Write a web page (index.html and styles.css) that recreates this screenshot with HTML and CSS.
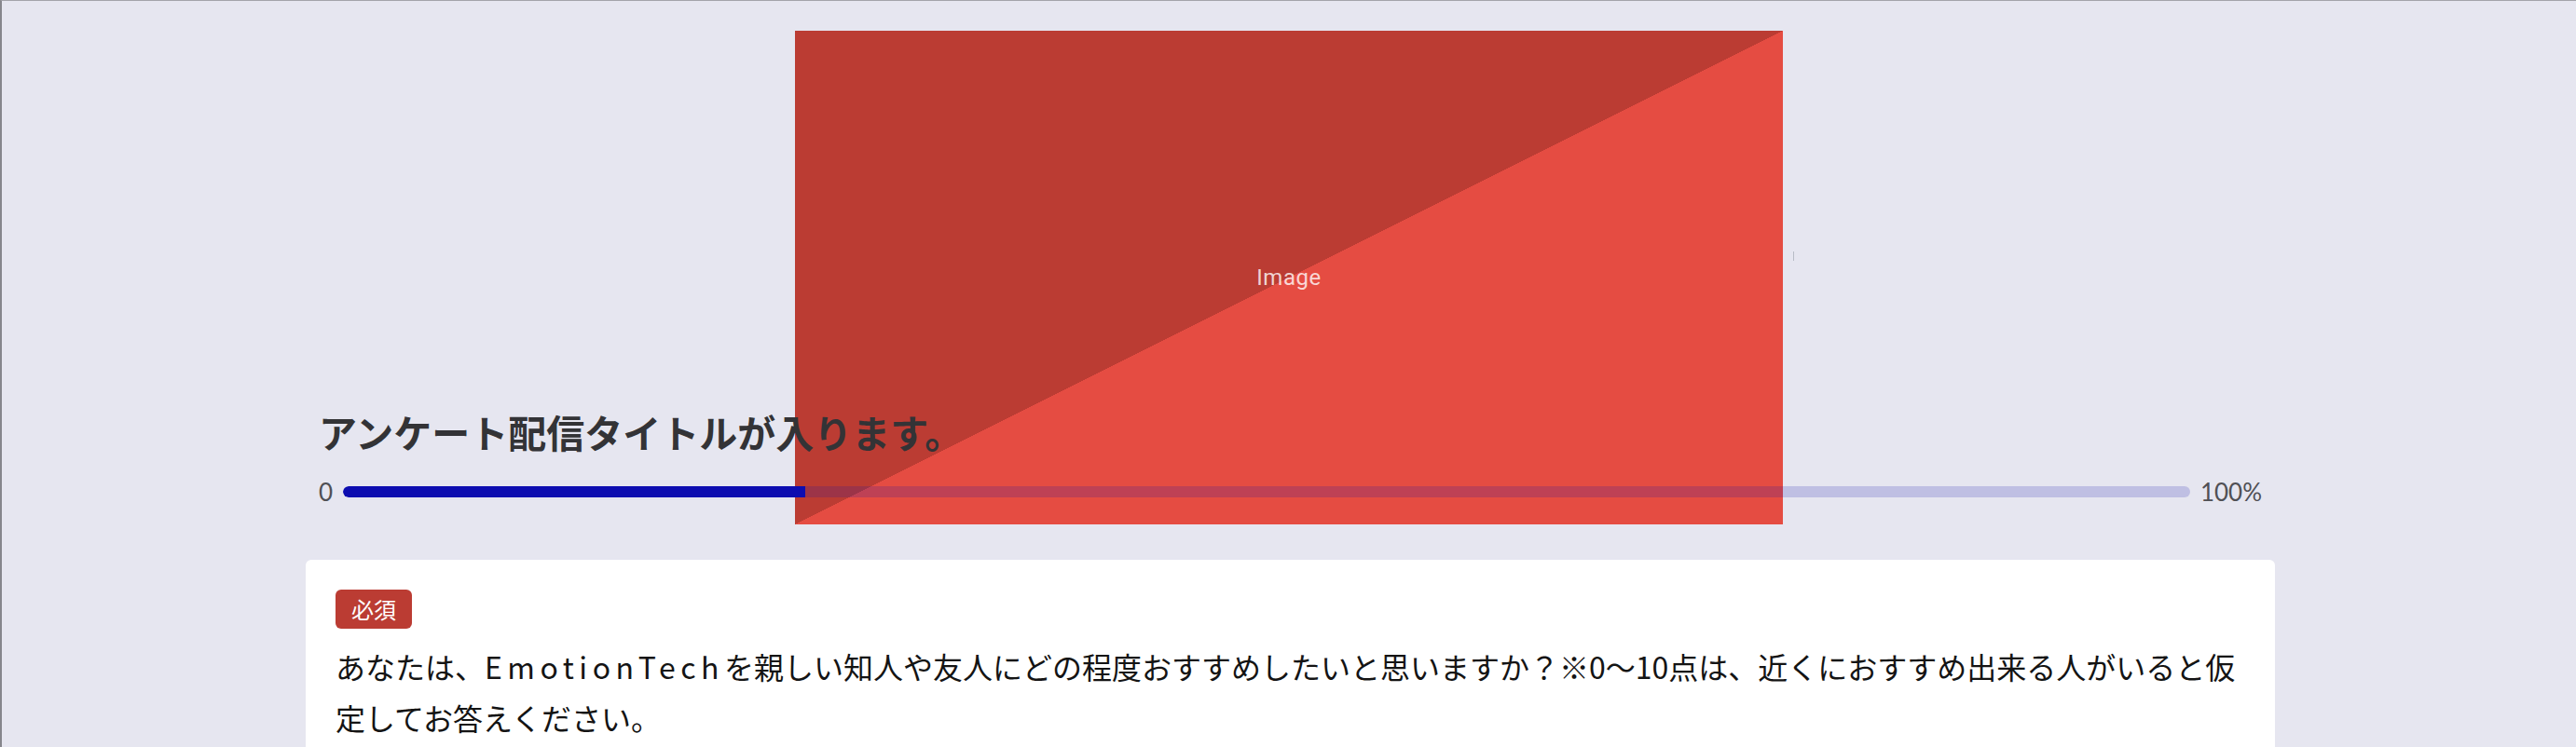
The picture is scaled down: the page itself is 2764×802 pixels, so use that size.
FILE: index.html
```html
<!DOCTYPE html>
<html lang="ja">
<head>
<meta charset="utf-8">
<title>アンケート</title>
<link rel="stylesheet" href="styles.css">
</head>
<body>
<div class="page">
  <div class="hero-image" aria-label="Image"><span class="hero-label">Image</span></div>
  <span class="caret"></span>
  <header class="survey-header">
    <h1 class="survey-title">アンケート配信タイトルが入ります。</h1>
    <div class="progress">
      <span class="progress-label">0</span>
      <div class="progress-track"><div class="progress-fill" style="width:25%"></div></div>
      <span class="progress-label">100%</span>
    </div>
  </header>
  <section class="question-card">
    <span class="badge">必須</span>
    <p class="question-text">あなたは、<span class="latin">EmotionTech</span>を親しい知人や友人にどの程度おすすめしたいと思いますか？※0〜10点は、近くにおすすめ出来る人がいると仮定してお答えください。</p>
  </section>
</div>
</body>
</html>
```

FILE: styles.css
```css
html, body {
  margin: 0;
  padding: 0;
}

body {
  background: #e6e6f0;
  border-top: 1px solid #a3a3aa;
  border-left: 2px solid #86868c;
  font-family: "Noto Sans CJK JP", "Noto Sans", sans-serif;
  min-height: 801px;
  box-sizing: border-box;
  overflow: hidden;
}

.page {
  position: relative;
  width: 2113px;
  margin: 0 auto;
  padding-left: 3px;
  padding-top: 434px;
  box-sizing: content-box;
}

.hero-image {
  position: absolute;
  top: 32px;
  left: calc(50% - 530px);
  width: 1060px;
  height: 530px;
  background: linear-gradient(to bottom right, #bb3c33 50%, #e54c42 50%);
  display: flex;
  align-items: center;
  justify-content: center;
  z-index: 0;
}

.hero-label {
  font-family: Roboto, "Noto Sans", sans-serif;
  font-size: 24px;
  letter-spacing: 0.5px;
  color: rgba(255, 255, 255, 0.78);
}

.caret {
  position: absolute;
  top: 269px;
  left: calc(50% + 541px);
  width: 1px;
  height: 10px;
  background: #b8bcc6;
}

.survey-header {
  position: relative;
  z-index: 1;
  padding: 0 14px;
}

.survey-title {
  margin: 0;
  font-size: 41px;
  line-height: 56px;
  font-weight: 700;
  color: #333336;
}

.progress {
  display: flex;
  align-items: center;
  gap: 11px;
  height: 30px;
  margin-top: 22px;
}

.progress-label {
  font-family: Lato, "Noto Sans", sans-serif;
  font-size: 26px;
  line-height: 30px;
  color: #505055;
}

.progress-track {
  flex: 1;
  height: 12px;
  border-radius: 6px;
  background: rgba(14, 14, 172, 0.18);
  overflow: hidden;
}

.progress-fill {
  height: 100%;
  background: #0d0db0;
  border-radius: 6px 0 0 6px;
}

.question-card {
  position: relative;
  z-index: 1;
  margin-top: 58px;
  background: #ffffff;
  border-radius: 6px;
  padding: 32px 32px 60px;
}

.badge {
  display: inline-block;
  height: 42px;
  padding: 0 17px;
  border-radius: 6px;
  background: #bb3c33;
  color: #ffffff;
  font-size: 24px;
  line-height: 42px;
}

.question-text {
  margin: 13px 0 0;
  font-size: 32px;
  line-height: 55px;
  color: #141414;
}

.latin {
  letter-spacing: 5.5px;
}
```
